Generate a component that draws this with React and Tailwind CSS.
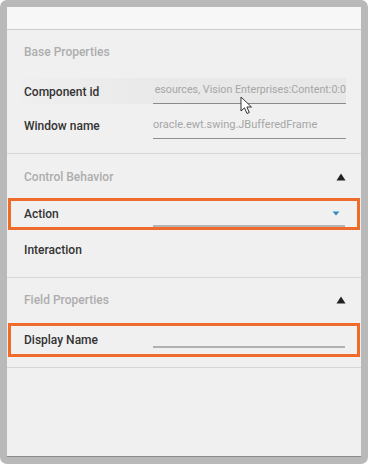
function Triangle() {
  return (
    <svg width="10" height="8" viewBox="0 0 10 8" className="mr-[10px]">
      <path d="M5 0.5 L9.5 7.5 L0.5 7.5 Z" fill="#222" />
    </svg>
  );
}

function Cursor() {
  return (
    <svg
      width="14"
      height="20"
      viewBox="0 0 14 20"
      className="absolute left-[240px] top-[96px]"
    >
      <path
        d="M1 1 L1 15 L4.5 11.8 L7 17.5 L9.3 16.5 L6.9 11 L11.5 11 Z"
        fill="#fff"
        stroke="#333"
        strokeWidth="1"
        strokeLinejoin="round"
      />
    </svg>
  );
}

function SectionTitle({ children, toggle }) {
  return (
    <div className="flex h-[16px] items-center justify-between pl-[17px] pr-[5px]">
      <span className="text-[12px] font-medium text-[#adadad]">{children}</span>
      {toggle && <Triangle />}
    </div>
  );
}

export default function App() {
  return (
    <div
      className="relative h-[464px] w-[368px] rounded-[7px] bg-[#b9b9b9] pb-[8px] pl-[7px] pr-[7px] pt-[7px]"
      style={{ fontFamily: "Roboto, 'Liberation Sans', sans-serif" }}
    >
      <div className="flex h-full flex-col bg-[#f0f0f0] shadow-[0_1px_0_#8a8a8a]">
        <div className="h-[23px] border-b border-[#cdcdcd] bg-[#f7f7f7]" />

        <div className="border-b border-[#d6d6d6] pb-[14px] pt-[14px]">
          <SectionTitle>Base Properties</SectionTitle>
          <div className="mt-[18px] flex flex-col gap-[9px]">
            <div className="mx-[15px] flex h-[26px] items-center bg-gradient-to-r from-[#efefef] via-[#e8e8e8] to-[#e8e8e8] pl-[2px]">
              <div className="w-[129px] pt-[1px] text-[12px] font-medium text-[#333]">Component id</div>
              <div className="flex h-[26px] flex-1 items-center justify-end whitespace-nowrap border-b border-[#8a8a8a] pb-[1px]">
                <span className="text-[10.7px] text-[#a6a6a6]">esources, Vision Enterprises:Content:0:0</span>
              </div>
            </div>
            <div className="mx-[15px] flex h-[26px] items-center pl-[2px]">
              <div className="w-[129px] text-[12px] font-medium text-[#333]">Window name</div>
              <div className="flex h-[26px] flex-1 items-center whitespace-nowrap border-b border-[#8f8f8f] pb-[1px]">
                <span className="text-[11px] text-[#a6a6a6]">oracle.ewt.swing.JBufferedFrame</span>
              </div>
            </div>
          </div>
        </div>

        <div className="border-b border-[#d6d6d6]">
          <div className="pt-[15px]">
            <SectionTitle toggle>Control Behavior</SectionTitle>
          </div>
          <div className="mx-[1px] mt-[13px] flex h-[32px] items-center border-[3px] border-[#ee6b2b] pl-[13px] pr-[12px]">
            <div className="w-[129px] text-[12px] font-medium text-[#333]">Action</div>
            <div className="flex h-full flex-1 items-center justify-end border-b-2 border-[#b4b4b4] pr-[5px]">
              <svg width="8" height="5" viewBox="0 0 8 5">
                <path d="M0.5 0.5 L4 4.5 L7.5 0.5 Z" fill="#2f8bc4" />
              </svg>
            </div>
          </div>
          <div className="flex h-[47px] items-start pl-[17px] pt-[11px] text-[12px] font-medium text-[#333]">
            Interaction
          </div>
        </div>

        <div className="border-b border-[#d6d6d6] pb-[10px]">
          <div className="pt-[14px]">
            <SectionTitle toggle>Field Properties</SectionTitle>
          </div>
          <div className="mx-[1px] mt-[15px] flex h-[34px] items-center border-[3px] border-[#ee6b2b] pl-[13px] pr-[12px]">
            <div className="w-[129px] text-[12px] font-medium text-[#333]">Display Name</div>
            <div className="mb-[4px] h-[20px] flex-1 border-b-2 border-[#b0b0b0]" />
          </div>
        </div>

        <div className="flex-1" />
      </div>
      <Cursor />
    </div>
  );
}
